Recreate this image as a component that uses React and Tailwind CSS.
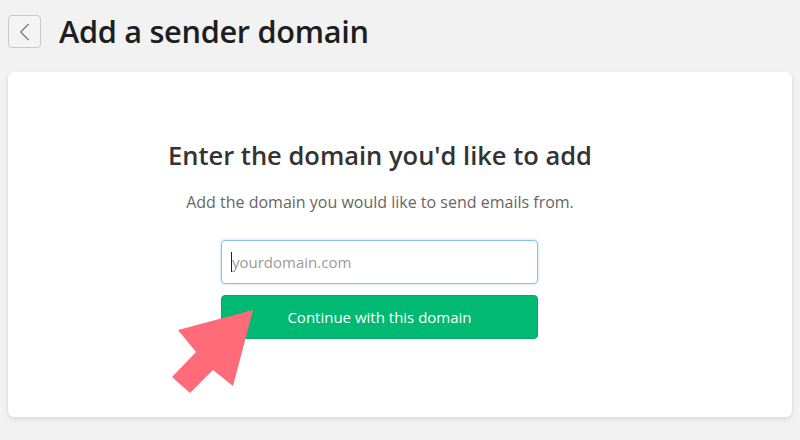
import { ChevronLeft } from 'lucide-react'

function PointerArrow() {
  return (
    <svg className="absolute left-0 top-0 pointer-events-none" width="800" height="440" viewBox="0 0 800 440">
      <polygon
        points="253,310 233,386 213,370 190,393 172,377 196,352 178,330"
        fill="#ff6b78"
      />
    </svg>
  )
}

export default function App() {
  return (
    <div className="relative w-[800px] h-[440px] bg-[#f2f2f2] overflow-hidden" style={{ fontFamily: '"Open Sans", "Noto Sans", sans-serif' }}>
      {/* Header */}
      <div className="flex items-center h-[62px] px-2 pt-[1px]">
        <button className="w-[33px] h-[33px] rounded-[4px] border border-[#c9c9c9] bg-[#f4f4f4] flex items-center justify-center text-[#777]">
          <ChevronLeft size={32} strokeWidth={0.9} />
        </button>
        <h1 className="ml-[18px] text-[30.7px] font-semibold text-[#1e1e1e] tracking-[-0.3px]">Add a sender domain</h1>
      </div>

      {/* Card */}
      <div className="mx-2 mt-[10px] h-[345px] bg-white rounded-[6px] shadow-[0_2px_5px_rgba(0,0,0,0.12)] flex flex-col items-center pt-[65px]">
        <h2 className="text-[25.5px] font-semibold text-[#333] leading-[36px] pr-[40px]">Enter the domain you'd like to add</h2>
        <p className="mt-[18px] text-[16px] text-[#666] leading-[22px] pr-[40px]">Add the domain you would like to send emails from.</p>

        <div className="mt-[27px] w-[317px] mr-[41px] flex flex-col gap-[11px]">
          <div className="h-[44px] rounded-[4px] border border-[#86c1f0] shadow-[0_0_3px_rgba(100,170,240,0.5)] flex items-center px-[9px]">
            <span className="w-px h-[20px] bg-[#222]" />
            <span className="text-[15px] text-[#9a9a9a]">yourdomain.com</span>
          </div>
          <button className="h-[44px] rounded-[4px] bg-[#00b972] border border-[#04a866] text-white text-[15px]">
            Continue with this domain
          </button>
        </div>
      </div>

      <PointerArrow />
    </div>
  )
}
